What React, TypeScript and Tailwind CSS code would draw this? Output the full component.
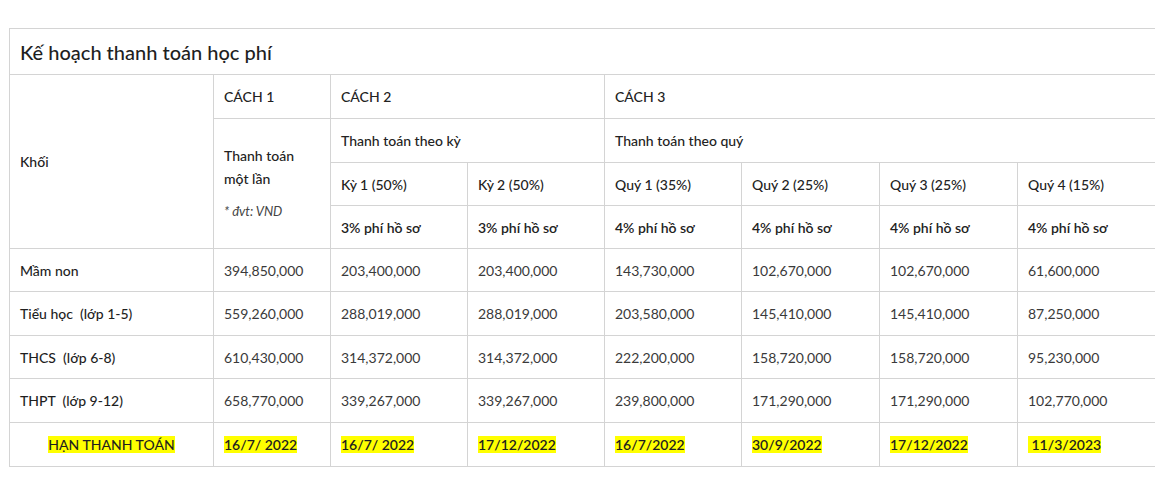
import React from "react";

const cell = "border border-[#d4d4d4] px-[10px] align-middle text-left";

const rows = [
  { label: "Mầm non", h: "h-[43px]", v: ["394,850,000", "203,400,000", "203,400,000", "143,730,000", "102,670,000", "102,670,000", "61,600,000"] },
  { label: "Tiểu học  (lớp 1-5)", h: "h-[44px]", v: ["559,260,000", "288,019,000", "288,019,000", "203,580,000", "145,410,000", "145,410,000", "87,250,000"] },
  { label: "THCS  (lớp 6-8)", h: "h-[43px]", v: ["610,430,000", "314,372,000", "314,372,000", "222,200,000", "158,720,000", "158,720,000", "95,230,000"] },
  { label: "THPT  (lớp 9-12)", h: "h-[44px]", v: ["658,770,000", "339,267,000", "339,267,000", "239,800,000", "171,290,000", "171,290,000", "102,770,000"] },
];

const dates = ["16/7/ 2022", "16/7/ 2022", "17/12/2022", "16/7/2022", "30/9/2022", "17/12/2022", "\u00a011/3/2023"];

function Mark({ children }: { children: React.ReactNode }) {
  return <span className="bg-[#ffff00] whitespace-pre">{children}</span>;
}

export default function App() {
  return (
    <div
      className="w-[1155px] h-[490px] bg-white overflow-hidden pt-[28px] pl-[9px] text-[14px] text-[#2b2b2b]"
      style={{ fontFamily: "Lato, 'Noto Sans', sans-serif" }}
    >
      <table className="border-collapse table-fixed w-[1158px]">
        <colgroup>
          <col className="w-[204px]" />
          <col className="w-[117px]" />
          <col className="w-[137px]" />
          <col className="w-[137px]" />
          <col className="w-[137px]" />
          <col className="w-[138px]" />
          <col className="w-[138px]" />
          <col className="w-[150px]" />
        </colgroup>
        <tbody>
          <tr className="h-[46px]">
            <td colSpan={8} className={`${cell} text-[20px] font-medium text-[#1f1f1f]`}>
              Kế hoạch thanh toán học phí
            </td>
          </tr>
          <tr className="h-[44px] font-medium text-[#222]">
            <td rowSpan={4} className={cell}>Khối</td>
            <td className={cell}>CÁCH 1</td>
            <td colSpan={2} className={cell}>CÁCH 2</td>
            <td colSpan={4} className={cell}>CÁCH 3</td>
          </tr>
          <tr className="h-[44px] font-medium text-[#222]">
            <td rowSpan={3} className={`${cell} leading-[23px]`}>
              <div>Thanh toán</div>
              <div>một lần</div>
              <div className="italic font-normal text-[13px] text-[#444] mt-[10px]">* đvt: VND</div>
            </td>
            <td colSpan={2} className={cell}>Thanh toán theo kỳ</td>
            <td colSpan={4} className={cell}>Thanh toán theo quý</td>
          </tr>
          <tr className="h-[43px] font-medium text-[#222]">
            <td className={cell}>Kỳ 1 (50%)</td>
            <td className={cell}>Kỳ 2 (50%)</td>
            <td className={cell}>Quý 1 (35%)</td>
            <td className={cell}>Quý 2 (25%)</td>
            <td className={cell}>Quý 3 (25%)</td>
            <td className={cell}>Quý 4 (15%)</td>
          </tr>
          <tr className="h-[43px] font-semibold text-[#222]">
            <td className={cell}>3% phí hồ sơ</td>
            <td className={cell}>3% phí hồ sơ</td>
            <td className={cell}>4% phí hồ sơ</td>
            <td className={cell}>4% phí hồ sơ</td>
            <td className={cell}>4% phí hồ sơ</td>
            <td className={cell}>4% phí hồ sơ</td>
          </tr>
          {rows.map((r) => (
            <tr key={r.label} className={r.h}>
              <td className={`${cell} font-medium text-[#1f1f1f] whitespace-pre`}>{r.label}</td>
              {r.v.map((x, i) => (
                <td key={i} className={`${cell} text-[#3a3a3a]`}>{x}</td>
              ))}
            </tr>
          ))}
          <tr className="h-[44px] font-semibold text-[#1f1f1f]">
            <td className={`${cell} text-center! font-medium`}>
              <Mark>HẠN THANH TOÁN</Mark>
            </td>
            {dates.map((d, i) => (
              <td key={i} className={cell}>
                <Mark>{d}</Mark>
              </td>
            ))}
          </tr>
        </tbody>
      </table>
    </div>
  );
}
